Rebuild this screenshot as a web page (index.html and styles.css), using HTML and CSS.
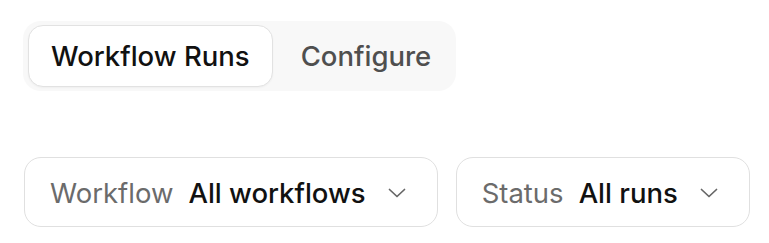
FILE: index.html
```html
<!DOCTYPE html>
<html lang="en">
<head>
<meta charset="utf-8">
<title>Workflow Runs</title>
<link rel="stylesheet" href="styles.css">
</head>
<body>
<div class="page">
  <div class="tabs">
    <button class="tab active">Workflow Runs</button>
    <button class="tab">Configure</button>
  </div>
  <div class="filters">
    <div class="select">
      <span class="label">Workflow</span>
      <span class="value">All workflows</span>
      <svg class="chev" width="18" height="10" viewBox="0 0 18 10"><path d="M1.5 1.5 L9 8.5 L16.5 1.5" fill="none" stroke="#666" stroke-width="1.7" stroke-linecap="round" stroke-linejoin="round"/></svg>
    </div>
    <div class="select">
      <span class="label">Status</span>
      <span class="value">All runs</span>
      <svg class="chev" width="18" height="10" viewBox="0 0 18 10"><path d="M1.5 1.5 L9 8.5 L16.5 1.5" fill="none" stroke="#666" stroke-width="1.7" stroke-linecap="round" stroke-linejoin="round"/></svg>
    </div>
  </div>
</div>
</body>
</html>
```
FILE: styles.css
```css
* { box-sizing: border-box; }
html, body { margin: 0; padding: 0; background: #fff; }
body { font-family: Inter, "Noto Sans", sans-serif; color: #111; white-space: nowrap; }
.page {
  padding: 21px 24px 0 23px;
  display: flex;
  flex-direction: column;
  align-items: flex-start;
  gap: 66px;
}
.tabs {
  display: inline-flex;
  gap: 5px;
  padding: 4px 4px 4px 5px;
  background: #f8f8f8;
  border-radius: 18px;
}
.tab {
  font-family: inherit;
  font-size: 27.5px;
  font-weight: 500;
  line-height: 32px;
  padding: 14px 22px;
  border: 1px solid transparent;
  border-radius: 15px;
  background: transparent;
  color: #4f4f4f;
  cursor: pointer;
  white-space: nowrap;
}
.tab.active {
  background: #fff;
  color: #111;
  border-color: #e2e2e2;
  box-shadow: 0 1px 2px rgba(0,0,0,0.04);
}
.tab + .tab { padding-right: 20px; }
.filters {
  display: flex;
  gap: 18px;
  margin-left: 1px;
}
.select {
  display: flex;
  flex-shrink: 0;
  align-items: center;
  height: 70px;
  padding: 1px 31px 0 25px;
  border: 1px solid #e0e0e0;
  border-radius: 17px;
  background: #fff;
  font-size: 27.5px;
  line-height: 32px;
}
.label {
  color: #6b6b6b;
  font-weight: 400;
  margin-right: 15px;
}
.value {
  color: #111;
  font-weight: 500;
  margin-right: 22px;
}
.chev { display: block; flex-shrink: 0; }
```
